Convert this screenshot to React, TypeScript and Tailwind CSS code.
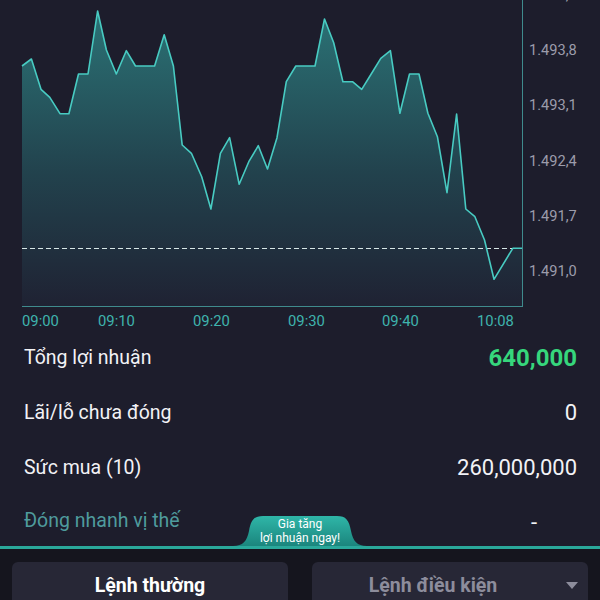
import * as React from 'react';

// price samples, already in chart pixel space (x, y)
const POINTS: [number, number][] = [
  [22, 66], [31.4, 59], [41, 89.3], [49.8, 97.3], [60, 113.7], [68.9, 113.7],
  [78.5, 74], [88, 74], [97.6, 11], [106.4, 50], [116.3, 74], [126.3, 50.7],
  [135.5, 66], [154.6, 66], [164.2, 34.7], [173.4, 66], [182.2, 145],
  [191.4, 153.3], [201.7, 176.7], [210.9, 209], [220.4, 153.3], [229.6, 137.7],
  [239.2, 184.3], [248.8, 161.7], [258.3, 145.7], [267.5, 169], [277, 137.7],
  [286.3, 81.7], [295.8, 66], [315, 66], [324.5, 19], [333.7, 42.7],
  [342.9, 81.7], [352.5, 81.7], [361.7, 89.3], [371.2, 74], [380.8, 58.3],
  [390.4, 50.7], [399.9, 113.3], [409.5, 74], [419, 74], [427.9, 113.3],
  [437.4, 136.7], [447, 192.7], [456.6, 114], [465.8, 209], [474.9, 216.7],
  [484.5, 240], [494, 279.3], [512.8, 248.3], [522, 248.3],
];

const Y_LABELS: [string, number][] = [
  ['1.494,5', -5.25],
  ['1.493,8', 50],
  ['1.493,1', 105.25],
  ['1.492,4', 160.5],
  ['1.491,7', 215.75],
  ['1.491,0', 271],
];

const X_LABELS: [string, number][] = [
  ['09:00', 22],
  ['09:10', 98],
  ['09:20', 193],
  ['09:30', 288],
  ['09:40', 382],
  ['10:08', 477],
];

const FONT = 'Roboto, "Noto Sans", "Liberation Sans", sans-serif';

function PriceChart() {
  const line = POINTS.map(([x, y], i) => `${i === 0 ? 'M' : 'L'}${x} ${y}`).join(' ');
  const area = `${line} L522 306 L22 306 Z`;

  return (
    <svg width={600} height={330} viewBox="0 0 600 330" className="block shrink-0">
      <defs>
        <linearGradient id="area" x1="0" y1="10" x2="0" y2="306" gradientUnits="userSpaceOnUse">
          <stop offset="0" stopColor="#2b7376" />
          <stop offset="0.55" stopColor="#22424d" />
          <stop offset="1" stopColor="#1f2233" />
        </linearGradient>
      </defs>
      <path d={area} fill="url(#area)" />
      <line x1={22} y1={248.5} x2={522} y2={248.5} stroke="#d6e6e6" strokeWidth={1} strokeDasharray="5 3" />
      <path d={line} fill="none" stroke="#48cbc2" strokeWidth={1.6} strokeLinejoin="round" />
      <line x1={522.5} y1={0} x2={522.5} y2={306.5} stroke="#3f8b8d" strokeWidth={1} />
      <line x1={22} y1={306.5} x2={523} y2={306.5} stroke="#3f8b8d" strokeWidth={1} />
      {Y_LABELS.map(([t, y]) => (
        <text key={t} x={529} y={y + 5} fill="#9c9cab" fontSize={14.6} fontFamily={FONT}>
          {t}
        </text>
      ))}
      {X_LABELS.map(([t, x]) => (
        <text key={t} x={x} y={326} fill="#3fb4ae" fontSize={14.8} fontFamily={FONT}>
          {t}
        </text>
      ))}
    </svg>
  );
}

function Row({ label, children }: { label: string; children: React.ReactNode }) {
  return (
    <div className="flex h-[55px] items-center justify-between pl-6 pr-[23px]">
      <span className="text-[19.5px] text-[#f2f2f6]">{label}</span>
      {children}
    </div>
  );
}

function BoostTab() {
  return (
    <div className="absolute bottom-0 left-[233px] h-[30px] w-[134px]">
      <svg width={134} height={30} viewBox="0 0 134 30" className="absolute inset-0">
        <defs>
          <linearGradient id="tab" x1="0" y1="0" x2="0" y2="1">
            <stop offset="0" stopColor="#2fb6a8" />
            <stop offset="1" stopColor="#1b857d" />
          </linearGradient>
        </defs>
        <path
          d="M0 30 C10 30 14 25 16 15 C18 4 21 0 30 0 L104 0 C113 0 116 4 118 15 C120 25 124 30 134 30 Z"
          fill="url(#tab)"
        />
      </svg>
      <div className="relative flex h-full flex-col items-center justify-center pt-[1px] text-[12px] leading-[13.5px] text-white">
        <span>Gia tăng</span>
        <span>lợi nhuận ngay!</span>
      </div>
    </div>
  );
}

export default function App() {
  return (
    <div
      className="flex h-[600px] w-[600px] flex-col overflow-hidden bg-[#1d1d2c]"
      style={{ fontFamily: FONT }}
    >
      <PriceChart />

      <div className="relative">
        <Row label="Tổng lợi nhuận">
          <span className="text-[24px] font-bold text-[#36d67c]">640,000</span>
        </Row>
        <Row label="Lãi/lỗ chưa đóng">
          <span className="text-[22px] text-[#f2f2f6]">0</span>
        </Row>
        <Row label="Sức mua (10)">
          <span className="text-[22px] text-[#f2f2f6]">260,000,000</span>
        </Row>
        <div className="flex h-[51px] items-start justify-between pl-6 pr-[23px] pt-[11px]">
          <span className="text-[19.5px] text-[#4f9b9d]">Đóng nhanh vị thế</span>
          <span className="mr-[40px] text-[22px] text-[#f2f2f6]">-</span>
        </div>
        <BoostTab />
      </div>

      <div className="h-[3px] shrink-0 bg-[#2aa89b]" />

      <div className="grid flex-1 grid-cols-2 gap-6 bg-[#15151e] px-3 pt-[13px]">
        <button className="flex h-[48px] items-center justify-center rounded-md bg-[#272736] text-[19.5px] font-bold text-white">
          Lệnh thường
        </button>
        <button className="relative flex h-[48px] items-center justify-center rounded-md bg-[#272736] pr-[34px] text-[19.5px] font-bold text-[#8d8d9c]">
          Lệnh điều kiện
          <svg width={12} height={7} viewBox="0 0 12 7" className="absolute right-[10px] top-[20px]">
            <path d="M0 0 L12 0 L6 7 Z" fill="#8d8d9c" />
          </svg>
        </button>
      </div>
    </div>
  );
}
